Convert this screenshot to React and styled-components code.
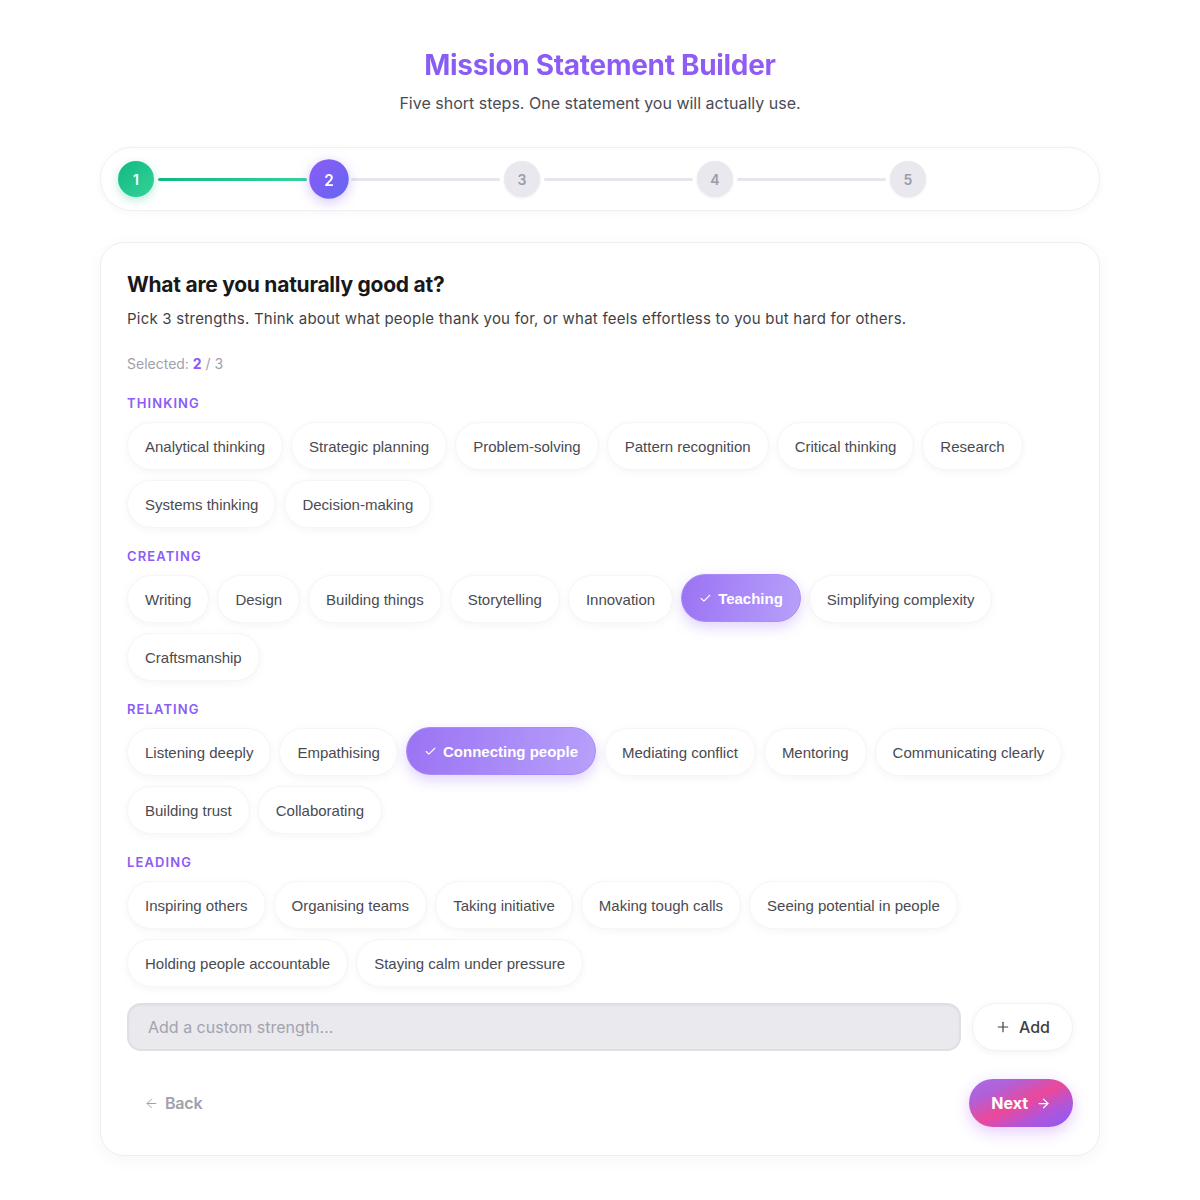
import styled, { createGlobalStyle } from "styled-components";
import { Check, Plus, ArrowLeft, ArrowRight } from "lucide-react";

const GlobalStyle = createGlobalStyle`
  * { box-sizing: border-box; }
  body {
    margin: 0;
    background: #ffffff;
    font-family: "Inter", "Liberation Sans", sans-serif;
    color: #27272a;
  }
`;

const Page = styled.main({
  width: "1000px",
  margin: "0 auto",
  padding: "47px 0 44px",
});

const Header = styled.header({
  textAlign: "center",
  marginBottom: "32px",
});

const Title = styled.h1({
  margin: 0,
  fontSize: "28px",
  lineHeight: "36px",
  fontWeight: 700,
  letterSpacing: "-0.3px",
  background: "linear-gradient(90deg, #7f5cf6, #9a5cf2)",
  WebkitBackgroundClip: "text",
  backgroundClip: "text",
  color: "transparent",
});

const Subtitle = styled.p({
  margin: "8px 0 0",
  fontSize: "16px",
  lineHeight: "24px",
  color: "#4b4b55",
});

const Stepper = styled.nav({
  height: "64px",
  padding: "0 16px 0 17px",
  display: "flex",
  alignItems: "center",
  background: "#fff",
  border: "1px solid #f0f0f3",
  borderRadius: "32px",
  boxShadow: "0 2px 10px rgba(0,0,0,0.035)",
  marginBottom: "31px",
});

const Step = styled.div({
  flex: 1,
  display: "flex",
  alignItems: "center",
});

const stepColors = {
  done: {
    background: "linear-gradient(135deg, #10b981, #34d399)",
    color: "#fff",
    boxShadow: "0 3px 10px rgba(16,185,129,0.3)",
  },
  active: {
    background: "linear-gradient(135deg, #8b5cf6, #6366f1)",
    color: "#fff",
    boxShadow: "0 3px 12px rgba(139,92,246,0.35)",
    transform: "scale(1.1)",
  },
  todo: {
    background: "#e8e8ee",
    color: "#9c9ca8",
    boxShadow: "0 1px 3px rgba(0,0,0,0.08)",
  },
};

const Dot = styled.div((p) => ({
  width: "36px",
  height: "36px",
  flexShrink: 0,
  borderRadius: "50%",
  display: "flex",
  alignItems: "center",
  justifyContent: "center",
  fontSize: "14px",
  fontWeight: 600,
  ...stepColors[p.$state],
}));

const Line = styled.div((p) => ({
  flex: 1,
  height: "3px",
  margin: "0 4px",
  borderRadius: "2px",
  background: p.$done ? "linear-gradient(90deg, #10b981, #34d399)" : "#e6e6ec",
}));

const Card = styled.section({
  background: "#fff",
  border: "1px solid #efeff2",
  borderRadius: "24px",
  boxShadow: "0 4px 18px rgba(0,0,0,0.04)",
  padding: "28px 26px 28px",
});

const Question = styled.h2({
  margin: 0,
  fontSize: "21px",
  lineHeight: "28px",
  fontWeight: 700,
  letterSpacing: "-0.25px",
  color: "#18181b",
});

const Hint = styled.p({
  margin: "8px 0 0",
  fontSize: "15px",
  lineHeight: "24px",
  letterSpacing: "0.22px",
  color: "#3f3f46",
});

const Counter = styled.div({
  margin: "23px 0 21px",
  fontSize: "14px",
  lineHeight: "20px",
  color: "#a1a1aa",
  "& b": { color: "#8b5cf6", fontWeight: 700 },
});

const Group = styled.div({
  marginBottom: "20px",
});

const GroupLabel = styled.div({
  fontSize: "13px",
  lineHeight: "16px",
  fontWeight: 600,
  letterSpacing: "1.1px",
  color: "#8b5cf6",
  marginBottom: "11px",
});

const Chips = styled.div({
  display: "flex",
  flexWrap: "wrap",
  gap: "10px 8px",
});

const Chip = styled.button((p) => ({
  height: "48px",
  padding: "0 17px",
  display: "inline-flex",
  alignItems: "center",
  gap: "6px",
  borderRadius: "24px",
  fontFamily: '"Liberation Sans", Arial, sans-serif',
  fontSize: "15px",
  cursor: "pointer",
  ...(p.$selected
    ? {
        border: "1px solid #a98cf7",
        background: "linear-gradient(100deg, #9b73f4, #b7a0fa)",
        color: "#fff",
        fontWeight: 700,
        boxShadow: "0 5px 14px rgba(139,92,246,0.28)",
        transform: "translateY(-1px)",
      }
    : {
        border: "1px solid #f6f6f8",
        background: "#fff",
        color: "#4a4a52",
        fontWeight: 400,
        boxShadow: "0 2px 8px rgba(0,0,0,0.045)",
      }),
}));

const AddRow = styled.div({
  display: "flex",
  gap: "11px",
  marginTop: "-4px",
});

const Input = styled.input({
  flex: 1,
  height: "48px",
  padding: "0 19px",
  background: "#e9e9ee",
  border: "2px solid #dfdfe5",
  borderRadius: "14px",
  fontFamily: "inherit",
  fontSize: "16px",
  color: "#3f3f46",
  outline: "none",
  boxShadow: "inset 0 1px 2px rgba(0,0,0,0.04)",
  "&::placeholder": { color: "#a3a3ad" },
});

const AddButton = styled.button({
  height: "48px",
  padding: "0 22px",
  display: "inline-flex",
  alignItems: "center",
  gap: "8px",
  background: "#fff",
  border: "1px solid #f2f2f5",
  borderRadius: "24px",
  boxShadow: "0 2px 8px rgba(0,0,0,0.05)",
  fontFamily: "inherit",
  fontSize: "16px",
  fontWeight: 500,
  color: "#3f3f46",
  cursor: "pointer",
});

const Footer = styled.div({
  display: "flex",
  justifyContent: "space-between",
  alignItems: "center",
  marginTop: "28px",
});

const BackButton = styled.button({
  height: "48px",
  padding: "0 17px",
  display: "inline-flex",
  alignItems: "center",
  gap: "6px",
  background: "transparent",
  border: "none",
  fontFamily: "inherit",
  fontSize: "16px",
  fontWeight: 600,
  letterSpacing: "-0.2px",
  color: "#a1a1aa",
  cursor: "pointer",
});

const NextButton = styled.button({
  height: "48px",
  padding: "0 22px",
  display: "inline-flex",
  alignItems: "center",
  gap: "8px",
  border: "none",
  borderRadius: "24px",
  background:
    "linear-gradient(to bottom right, #a66ee8 0%, #b35fd6 25%, #ec4899 50%, #b255d8 72%, #8b5cf6 100%)",
  boxShadow: "0 5px 16px rgba(168,85,247,0.3)",
  fontFamily: "inherit",
  fontSize: "16px",
  fontWeight: 700,
  color: "#fff",
  cursor: "pointer",
});

const groups = [
  {
    label: "Thinking",
    items: [
      "Analytical thinking",
      "Strategic planning",
      "Problem-solving",
      "Pattern recognition",
      "Critical thinking",
      "Research",
      "Systems thinking",
      "Decision-making",
    ],
  },
  {
    label: "Creating",
    items: [
      "Writing",
      "Design",
      "Building things",
      "Storytelling",
      "Innovation",
      "Teaching",
      "Simplifying complexity",
      "Craftsmanship",
    ],
  },
  {
    label: "Relating",
    items: [
      "Listening deeply",
      "Empathising",
      "Connecting people",
      "Mediating conflict",
      "Mentoring",
      "Communicating clearly",
      "Building trust",
      "Collaborating",
    ],
  },
  {
    label: "Leading",
    items: [
      "Inspiring others",
      "Organising teams",
      "Taking initiative",
      "Making tough calls",
      "Seeing potential in people",
      "Holding people accountable",
      "Staying calm under pressure",
    ],
  },
];

const selected = ["Teaching", "Connecting people"];

const steps = [1, 2, 3, 4, 5];
const current = 2;

export default function App() {
  return (
    <Page>
      <GlobalStyle />
      <Header>
        <Title>Mission Statement Builder</Title>
        <Subtitle>Five short steps. One statement you will actually use.</Subtitle>
      </Header>

      <Stepper>
        {steps.map((n) => {
          const state = n < current ? "done" : n === current ? "active" : "todo";
          return (
            <Step key={n}>
              <Dot $state={state}>{n}</Dot>
              {n < steps.length && <Line $done={n < current} />}
            </Step>
          );
        })}
      </Stepper>

      <Card>
        <Question>What are you naturally good at?</Question>
        <Hint>
          Pick 3 strengths. Think about what people thank you for, or what feels
          effortless to you but hard for others.
        </Hint>
        <Counter>
          Selected: <b>{selected.length}</b> / 3
        </Counter>

        {groups.map((g) => (
          <Group key={g.label}>
            <GroupLabel>{g.label.toUpperCase()}</GroupLabel>
            <Chips>
              {g.items.map((item) => {
                const on = selected.includes(item);
                return (
                  <Chip key={item} $selected={on}>
                    {on && <Check size={13} strokeWidth={2} />}
                    {item}
                  </Chip>
                );
              })}
            </Chips>
          </Group>
        ))}

        <AddRow>
          <Input placeholder="Add a custom strength..." />
          <AddButton>
            <Plus size={16} strokeWidth={1.8} />
            Add
          </AddButton>
        </AddRow>

        <Footer>
          <BackButton>
            <ArrowLeft size={15} strokeWidth={1.6} />
            Back
          </BackButton>
          <NextButton>
            Next
            <ArrowRight size={15} strokeWidth={2} />
          </NextButton>
        </Footer>
      </Card>
    </Page>
  );
}
